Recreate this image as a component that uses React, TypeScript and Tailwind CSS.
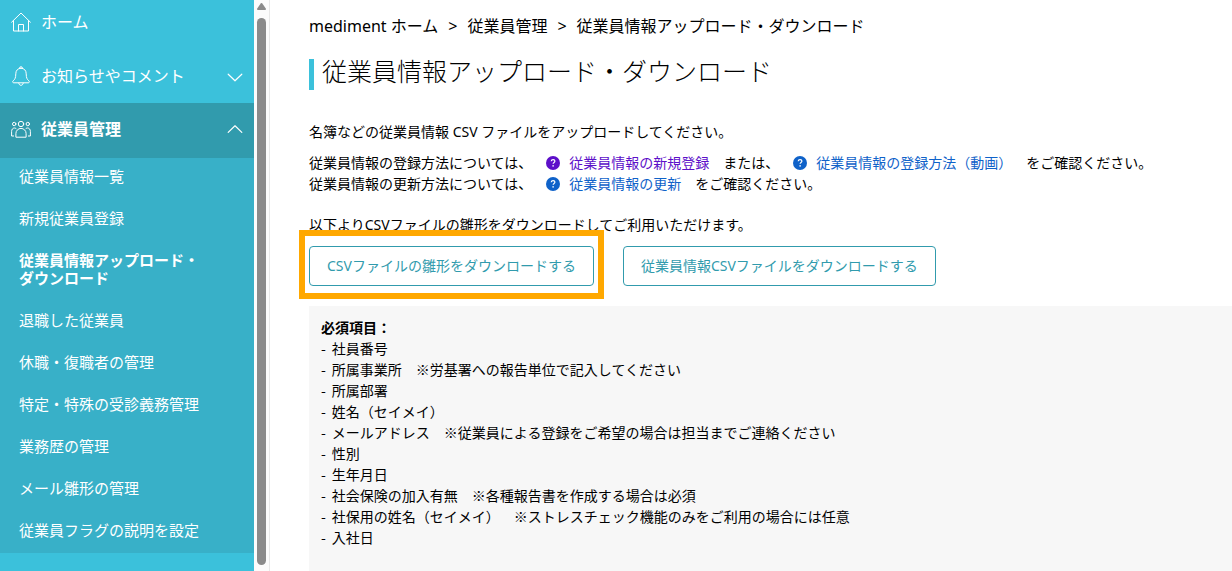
import React, { useState } from 'react'

const subMenu = [
  '従業員情報一覧',
  '新規従業員登録',
  '従業員情報アップロード・ダウンロード',
  '退職した従業員',
  '休職・復職者の管理',
  '特定・特殊の受診義務管理',
  '業務歴の管理',
  'メール雛形の管理',
  '従業員フラグの説明を設定',
];

const requiredItems = [
  '社員番号',
  '所属事業所　※労基署への報告単位で記入してください',
  '所属部署',
  '姓名（セイメイ）',
  'メールアドレス　※従業員による登録をご希望の場合は担当までご連絡ください',
  '性別',
  '生年月日',
  '社会保険の加入有無　※各種報告書を作成する場合は必須',
  '社保用の姓名（セイメイ）　※ストレスチェック機能のみをご利用の場合には任意',
  '入社日',
];

const HomeIcon = () => (
  <svg className="w-5 h-5 shrink-0" viewBox="0 0 20 20" fill="none" stroke="currentColor" strokeLinejoin="round" strokeLinecap="round">
    <path d="M0.6 10.2 10 1l9.4 9.2" />
    <path d="M2.5 8.8v10.2h15V8.8" />
    <path d="M7.5 19v-6.5h5V19" />
  </svg>
);

const BellIcon = () => (
  <svg className="w-5 h-5 shrink-0" viewBox="0 0 20 20" fill="none" stroke="currentColor" strokeLinejoin="round" strokeLinecap="round">
    <path d="M8.4 2.3a1.6 1.6 0 0 1 3.2 0" />
    <path d="M10 2.2c-3.4 0-5.2 2.5-5.2 5.6 0 4.2-1 5.6-2.6 7-.9.8-.6 2 .5 2h14.6c1.1 0 1.4-1.2.5-2-1.6-1.4-2.6-2.8-2.6-7 0-3.1-1.8-5.6-5.2-5.6z" />
    <path d="M7.8 17.2c.2 1.3 1 2.1 2.2 2.1s2-.8 2.2-2.1" />
  </svg>
);

const PeopleIcon = () => (
  <svg className="w-5 h-5 shrink-0" viewBox="0 0 20 20" fill="none" stroke="currentColor" strokeLinejoin="round" strokeLinecap="round">
    <circle cx="10" cy="5" r="2.7" />
    <circle cx="3.2" cy="5" r="1.7" />
    <circle cx="16.8" cy="5" r="1.7" />
    <path d="M4.9 17.8v-3.3a5.1 5.1 0 0 1 10.2 0v3.3z" />
    <path d="M2.6 17H.6v-4.5c0-2 1.1-3.5 2.7-3.5.9 0 1.6.3 2.1.9" />
    <path d="M17.4 17h2v-4.5c0-2-1.1-3.5-2.7-3.5-.9 0-1.6.3-2.1.9" />
  </svg>
);

const Chevron = ({ open }: { open: boolean }) => (
  <svg className="ml-auto w-4 h-4 shrink-0" viewBox="0 0 16 16" fill="none" stroke="currentColor" strokeWidth="1.2" strokeLinecap="round" strokeLinejoin="round">
    <path d={open ? 'M1.2 11.4 8 4.8l6.8 6.6' : 'M1.2 6.2 8 12.8l6.8-6.6'} />
  </svg>
);

const HelpLink = ({ visited, children }: { visited?: boolean; children: React.ReactNode }) => (
  <a href="#" className={visited ? 'flex items-center gap-[9px] text-[#5d0fc9]' : 'flex items-center gap-[9px] text-[#0f62c9]'}>
    <svg className="w-[14px] h-[14px] shrink-0" viewBox="0 0 14 14" fill="none">
      <circle cx="7" cy="7" r="7" fill="currentColor" />
      <path d="M5.2 5.3c.1-1.1.9-1.7 1.9-1.7s1.8.6 1.8 1.5c0 1.3-1.7 1.3-1.8 2.7" stroke="#fff" strokeWidth="1.2" />
      <circle cx="7.1" cy="9.9" r=".8" fill="#fff" />
    </svg>
    {children}
  </a>
);

export const EmployeeUpload = () => {
  const [current, setCurrent] = useState('従業員情報アップロード・ダウンロード');
  const [employeeOpen, setEmployeeOpen] = useState(true);
  const [noticeOpen, setNoticeOpen] = useState(false);

  return (
    <div className="flex h-screen overflow-hidden bg-white text-black text-sm font-['Noto_Sans','Noto_Sans_CJK_JP',sans-serif] [text-spacing-trim:space-all]" lang="ja">
      {/* Sidebar */}
      <nav className="w-[254px] shrink-0 bg-[#3bc1db] text-white text-base">
        <a href="#" className="flex items-center gap-[10px] h-12 pl-[11px] pr-[11px] pb-1">
          <HomeIcon />
          ホーム
        </a>
        <button className="flex items-center gap-[10px] w-full h-[55px] pl-[11px] pr-[11px]" onClick={() => setNoticeOpen(!noticeOpen)}>
          <BellIcon />
          お知らせやコメント
          <Chevron open={noticeOpen} />
        </button>
        <button className="flex items-center gap-[10px] w-full h-[55px] pl-[11px] pr-[11px] pb-1 bg-[#319bad] font-bold" onClick={() => setEmployeeOpen(!employeeOpen)}>
          <PeopleIcon />
          従業員管理
          <Chevron open={employeeOpen} />
        </button>
        {employeeOpen && (
          <ul className="flex flex-col gap-6 pt-[9px] pb-[14px] px-[19px] bg-[#38b0c8] text-[15px] leading-[18px]">
            {subMenu.map((item) => (
              <li key={item}>
                <a href="#" className={item === current ? 'block w-[190px] font-bold' : 'block'} onClick={() => setCurrent(item)}>{item}</a>
              </li>
            ))}
          </ul>
        )}
      </nav>

      {/* Scroll track */}
      <div className="flex flex-col items-center w-4 shrink-0 pt-[3px] pb-[6px] bg-[#fcfcfc] border-r border-[#e8e8e8]">
        <svg className="w-[9px] h-[7px] mb-2 shrink-0" viewBox="0 0 9 7" fill="#8b8b8b">
          <path d="M3.7.5a1 1 0 0 1 1.6 0L8.8 5.5A1 1 0 0 1 8 7H1A1 1 0 0 1 .2 5.5z" />
        </svg>
        <div className="w-[9px] flex-1 rounded-full bg-[#8b8b8b]" />
      </div>

      {/* Content */}
      <main className="flex-1 min-w-0 pl-[39px] pt-[14px] leading-[21px]">
        <div className="flex gap-[10px] text-base leading-6">
          <a href="#">mediment ホーム</a>
          <span>&gt;</span>
          <a href="#">従業員管理</a>
          <span>&gt;</span>
          <span>従業員情報アップロード・ダウンロード</span>
        </div>
        <h1 className="mt-[21px] border-l-[5px] border-[#3bc1db] pl-2 pb-[6px] text-[25px] leading-[25px] font-light">従業員情報アップロード・ダウンロード</h1>

        <p className="mt-[31px]">名簿などの従業員情報 CSV ファイルをアップロードしてください。</p>
        <div className="mt-[10px] flex gap-[14px]">
          従業員情報の登録方法については、
          <HelpLink visited>従業員情報の新規登録</HelpLink>
          または、
          <HelpLink>従業員情報の登録方法（動画）</HelpLink>
          をご確認ください。
        </div>
        <div className="flex gap-[14px]">
          従業員情報の更新方法については、
          <HelpLink>従業員情報の更新</HelpLink>
          をご確認ください。
        </div>

        <p className="mt-5">以下よりCSVファイルの雛形をダウンロードしてご利用いただけます。</p>
        <div className="mt-[11px] flex gap-[29px]">
          <div className="relative">
            <button className="h-10 px-[17px] pb-[2px] border border-[#319bad] rounded text-[#319bad] bg-white">CSVファイルの雛形をダウンロードする</button>
            <div className="absolute -inset-x-[10px] -top-4 -bottom-[13px] border-[6px] border-[#ffa800] pointer-events-none" />
          </div>
          <button className="h-10 px-[17px] pb-[2px] border border-[#319bad] rounded text-[#319bad] bg-white">従業員情報CSVファイルをダウンロードする</button>
        </div>

        {/* Required columns */}
        <div className="mt-5 px-3 pt-[11px] pb-10 bg-[#f7f7f7]">
          <strong>必須項目：</strong>
          <ul className="font-['Noto_Sans_CJK_JP',sans-serif]">
            {requiredItems.map((item) => (
              <li key={item} className="flex gap-[6px]">
                <span>-</span>
                {item}
              </li>
            ))}
          </ul>
        </div>
      </main>
    </div>
  );
};

export default EmployeeUpload;
